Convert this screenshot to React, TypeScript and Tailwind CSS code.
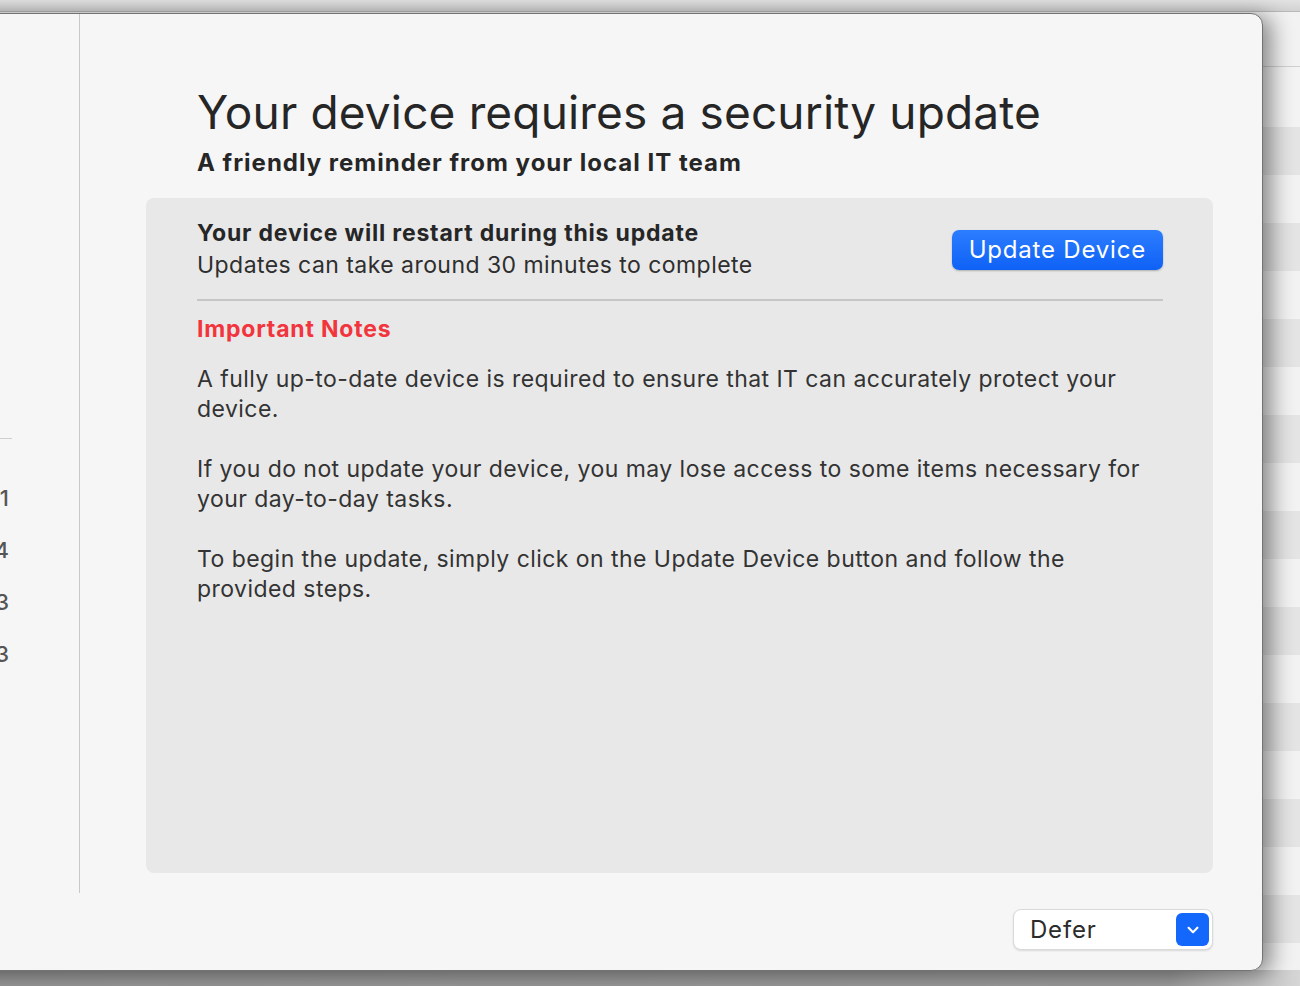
import React from 'react';
import { HiChevronDown } from 'react-icons/hi';

const font = { fontFamily: 'Inter, "Liberation Sans", sans-serif' };

// Background list rows seen behind the dialog window
const BackgroundRows = () => {
    const rows = Array.from({ length: 9 }, (_, i) => i);
    return (
        <div className="flex flex-col">
            <div className="h-[12px] bg-gradient-to-b from-[#e2e2e2] to-[#d2d2d2] border-b border-[#b9b9b9]" />
            <div className="h-[55px] bg-[#f2f2f2] border-b border-[#d0d0d0]" />
            <div className="h-[60px] bg-[#f3f3f3]" />
            {rows.map((i) => (
                <React.Fragment key={i}>
                    <div className="h-[48px] bg-[#e4e4e4]" />
                    <div className="h-[48px] bg-[#f2f2f2]" />
                </React.Fragment>
            ))}
        </div>
    );
};

const SidebarCounts = () => {
    const counts = ['1', '4', '3', '3'];
    return (
        <div className="flex flex-col">
            {counts.map((c, i) => (
                <div key={i} className="h-[52px] flex items-center justify-end pr-[3px] text-[22px] font-medium text-[#555]">
                    {c}
                </div>
            ))}
        </div>
    );
};

export default function App() {
    return (
        <div className="relative w-[1300px] h-[986px] overflow-hidden bg-[#f2f2f2]" style={font}>
            <BackgroundRows />
            <div className="absolute left-0 right-0 bottom-0 h-[16px] bg-gradient-to-r from-[#989898] via-[#9c9c9c] via-90% to-[#d6d6d6]" />

            {/* dialog window */}
            <div className="absolute left-[-200px] top-[13px] w-[1463px] h-[958px] rounded-[12px] border border-[#737373] bg-[#f6f6f6] shadow-[8px_3px_22px_rgba(0,0,0,0.45)] flex">
                {/* sidebar */}
                <div className="w-[279px] shrink-0">
                    <div className="h-[879px] border-r border-[#c8c8c8] pl-[20px] pr-[67px] pt-[424px]">
                        <div className="h-px bg-[#cfcfcf]" />
                        <div className="pt-[33px]">
                            <SidebarCounts />
                        </div>
                    </div>
                </div>

                {/* main content */}
                <div className="flex-1 flex flex-col pl-[66px] pr-[49px]">
                    <div className="pl-[51px] pt-[70px]">
                        <h1 className="text-[46px] leading-[56px] tracking-[0.15px] text-[#262626]">
                            Your device requires a security update
                        </h1>
                        <p className="mt-[8px] text-[24px] leading-[30px] font-bold text-[#262626] tracking-[1px]">
                            A friendly reminder from your local IT team
                        </p>
                    </div>

                    <div className="mt-[20px] h-[675px] rounded-[8px] bg-[#e8e8e8] pl-[51px] pr-[50px] pt-[19px]">
                        <div className="flex items-start justify-between">
                            <div>
                                <p className="text-[23px] leading-[32px] font-bold text-[#262626] tracking-[0.8px]">
                                    Your device will restart during this update
                                </p>
                                <p className="text-[23px] leading-[32px] text-[#2e2e2e] tracking-[0.45px]">
                                    Updates can take around 30 minutes to complete
                                </p>
                            </div>
                            <button className="mt-[13px] h-[40px] px-[17px] rounded-[7px] bg-gradient-to-b from-[#2c7dff] to-[#0d61f5] text-white text-[24px] tracking-[0.8px] shadow-[0_1px_2px_rgba(0,0,0,0.25)]">
                                Update Device
                            </button>
                        </div>

                        <div className="mt-[18px] h-[2px] bg-[#c6c6c6]" />

                        <p className="mt-[13px] text-[23px] leading-[30px] font-bold text-[#f2353d] tracking-[0.8px]">
                            Important Notes
                        </p>

                        <div className="mt-[20px] pr-[20px] flex flex-col gap-[30px] text-[23px] leading-[30px] text-[#333] tracking-[0.45px]">
                            <p>A fully up-to-date device is required to ensure that IT can accurately protect your device.</p>
                            <p>If you do not update your device, you may lose access to some items necessary for your day-to-day tasks.</p>
                            <p>To begin the update, simply click on the Update Device button and follow the provided steps.</p>
                        </div>
                    </div>

                    <div className="flex justify-end mt-[36px]">
                        <div className="w-[200px] h-[41px] rounded-[8px] bg-white border border-[#dadada] shadow-[0_1px_2px_rgba(0,0,0,0.12)] flex items-center justify-between pl-[16px] pr-[3px]">
                            <span className="text-[24px] text-[#2b2b2b] tracking-[0.8px]">Defer</span>
                            <span className="w-[33px] h-[33px] rounded-[6px] bg-[#1467fb] flex items-center justify-center">
                                <HiChevronDown className="w-[22px] h-[22px] text-white" />
                            </span>
                        </div>
                    </div>
                </div>
            </div>
        </div>
    );
}
